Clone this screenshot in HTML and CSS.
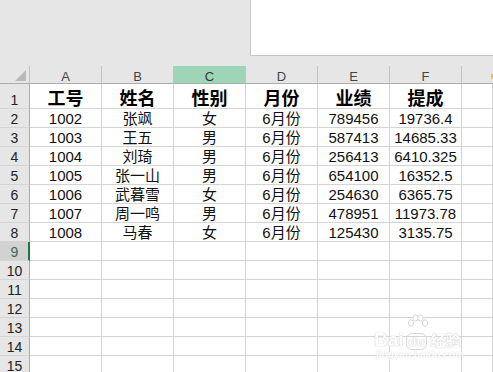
FILE: index.html
```html
<!DOCTYPE html>
<html lang="zh-CN">
<head>
<meta charset="utf-8">
<title>Sheet</title>
<link rel="stylesheet" href="styles.css">
</head>
<body>
<div class="top"><div class="namebox"></div></div>
<div class="sheet">
  <div class="ch corner"><span class="tri"></span></div>
  <div class="ch">A</div><div class="ch">B</div><div class="ch sel">C</div><div class="ch">D</div><div class="ch">E</div><div class="ch">F</div><div class="ch last"></div>

  <div class="rh">1</div>
  <div class="c hd">工号</div><div class="c hd">姓名</div><div class="c hd">性别</div><div class="c hd">月份</div><div class="c hd">业绩</div><div class="c hd">提成</div><div class="c"></div>

  <div class="rh">2</div>
  <div class="c">1002</div><div class="c">张飒</div><div class="c">女</div><div class="c">6月份</div><div class="c">789456</div><div class="c">19736.4</div><div class="c"></div>

  <div class="rh">3</div>
  <div class="c">1003</div><div class="c">王五</div><div class="c">男</div><div class="c">6月份</div><div class="c">587413</div><div class="c">14685.33</div><div class="c"></div>

  <div class="rh">4</div>
  <div class="c">1004</div><div class="c">刘琦</div><div class="c">男</div><div class="c">6月份</div><div class="c">256413</div><div class="c">6410.325</div><div class="c"></div>

  <div class="rh">5</div>
  <div class="c">1005</div><div class="c">张一山</div><div class="c">男</div><div class="c">6月份</div><div class="c">654100</div><div class="c">16352.5</div><div class="c"></div>

  <div class="rh">6</div>
  <div class="c">1006</div><div class="c">武暮雪</div><div class="c">女</div><div class="c">6月份</div><div class="c">254630</div><div class="c">6365.75</div><div class="c"></div>

  <div class="rh">7</div>
  <div class="c">1007</div><div class="c">周一鸣</div><div class="c">男</div><div class="c">6月份</div><div class="c">478951</div><div class="c">11973.78</div><div class="c"></div>

  <div class="rh">8</div>
  <div class="c">1008</div><div class="c">马春</div><div class="c">女</div><div class="c">6月份</div><div class="c">125430</div><div class="c">3135.75</div><div class="c"></div>

  <div class="rh rsel">9</div>
  <div class="c"></div><div class="c"></div><div class="c"></div><div class="c"></div><div class="c"></div><div class="c"></div><div class="c"></div>

  <div class="rh">10</div>
  <div class="c"></div><div class="c"></div><div class="c"></div><div class="c"></div><div class="c"></div><div class="c"></div><div class="c"></div>

  <div class="rh">11</div>
  <div class="c"></div><div class="c"></div><div class="c"></div><div class="c"></div><div class="c"></div><div class="c"></div><div class="c"></div>

  <div class="rh">12</div>
  <div class="c"></div><div class="c"></div><div class="c"></div><div class="c"></div><div class="c"></div><div class="c"></div><div class="c"></div>

  <div class="rh">13</div>
  <div class="c"></div><div class="c"></div><div class="c"></div><div class="c"></div><div class="c"></div><div class="c"></div><div class="c"></div>

  <div class="rh">14</div>
  <div class="c"></div><div class="c"></div><div class="c"></div><div class="c"></div><div class="c"></div><div class="c"></div><div class="c"></div>

  <div class="rh">15</div>
  <div class="c"></div><div class="c"></div><div class="c"></div><div class="c"></div><div class="c"></div><div class="c"></div><div class="c"></div>
</div>
<div class="mark"></div>
<div class="wm">
  <div class="wm-line"><span class="wm-bai">Bai</span><span class="wm-du">du</span><span class="wm-jy">经验</span></div>
  <div class="wm-url">jingyan.baidu.com</div>
  <svg class="wm-paw" width="22" height="18" viewBox="0 0 22 18">
    <g fill="#fff" stroke="#d8d8d8" stroke-width="1">
      <ellipse cx="4" cy="9" rx="2.6" ry="3.2"/>
      <ellipse cx="8.5" cy="4" rx="2.6" ry="3.2"/>
      <ellipse cx="13.5" cy="4" rx="2.6" ry="3.2"/>
      <ellipse cx="18" cy="9" rx="2.6" ry="3.2"/>
    </g>
  </svg>
</div>
</body>
</html>
```
FILE: styles.css
```css
html, body {
  margin: 0;
  padding: 0;
}
body {
  width: 493px;
  height: 372px;
  overflow: hidden;
  background: #ffffff;
  position: relative;
  font-family: "Liberation Sans", "Noto Sans CJK SC", sans-serif;
  color: #111;
}
.top {
  height: 66px;
  background: #e6e6e6;
  display: flex;
  justify-content: flex-end;
}
.namebox {
  width: 243px;
  height: 56px;
  box-sizing: border-box;
  background: #ffffff;
  border-left: 1px solid #c6c6c6;
  border-bottom: 1px solid #c6c6c6;
}
.sheet {
  display: grid;
  grid-template-columns: 30px repeat(6, 72px) 1fr;
  grid-template-rows: 18px 25px repeat(14, 19px);
}
.sheet > div {
  box-sizing: border-box;
  display: flex;
  align-items: flex-end;
  justify-content: center;
  overflow: hidden;
  white-space: nowrap;
}
.ch {
  background: #e6e6e6;
  border-right: 1px solid #c3c3c3;
  border-bottom: 1px solid #ababab;
  font-size: 13px;
  line-height: 13px;
  color: #444;
}
.ch.last { border-right: none; }
.ch.sel { background: #9fd5b7; color: #333; }
.corner {
  border-right: 1px solid #c3c3c3;
  justify-content: flex-end !important;
  padding: 0 3px 2px 0;
}
.tri {
  width: 0;
  height: 0;
  border-left: 11px solid transparent;
  border-bottom: 11px solid #b9b9b9;
}
.rh {
  background: #e6e6e6;
  border-right: 1px solid #ababab;
  border-bottom: 1px solid #d4d4d4;
  font-size: 14px;
  line-height: 14px;
  color: #222;
  padding-bottom: 1px;
}
.rh.rsel {
  background: #d2d2d2;
  border-right: 2px solid #217346;
  color: #3b6a4e;
  padding-left: 1px;
}
.c {
  border-right: 1px solid #d4d4d4;
  border-bottom: 1px solid #d4d4d4;
  font-size: 15px;
  line-height: 15px;
  padding-bottom: 1px;
}
.c.hd {
  font-family: "Noto Sans CJK SC", sans-serif;
  font-weight: 700;
  font-size: 18px;
  line-height: 18px;
  padding-bottom: 2px;
  color: #000;
}
.mark {
  position: absolute;
  left: 491px;
  top: 74px;
  width: 2px;
  height: 5px;
  background: #f0c24a;
}
.wm {
  position: absolute;
  left: 374px;
  top: 314px;
  width: 95px;
  height: 46px;
}
.wm-line {
  position: absolute;
  left: 0;
  top: 16px;
  display: flex;
  align-items: baseline;
  color: #fff;
  text-shadow: 0 0 1px #c8c8c8, 0 0 1px #c8c8c8;
}
.wm-bai {
  font-family: "Liberation Sans", sans-serif;
  font-weight: 700;
  font-size: 19px;
  line-height: 19px;
}
.wm-du {
  font-family: "Liberation Sans", sans-serif;
  font-weight: 700;
  font-size: 13px;
  line-height: 13px;
  margin-left: 2px;
  padding: 1px 2px;
  border: 1px solid #d8d8d8;
  border-radius: 6px;
}
.wm-jy {
  font-family: "Noto Sans CJK SC", sans-serif;
  font-weight: 700;
  font-size: 15px;
  line-height: 15px;
  margin-left: 3px;
}
.wm-url {
  position: absolute;
  left: 2px;
  top: 36px;
  font-size: 10px;
  line-height: 10px;
  font-weight: 700;
  color: #fff;
  text-shadow: 0 0 1px #cfcfcf;
}
.wm-paw {
  position: absolute;
  left: 33px;
  top: 0;
}
```
